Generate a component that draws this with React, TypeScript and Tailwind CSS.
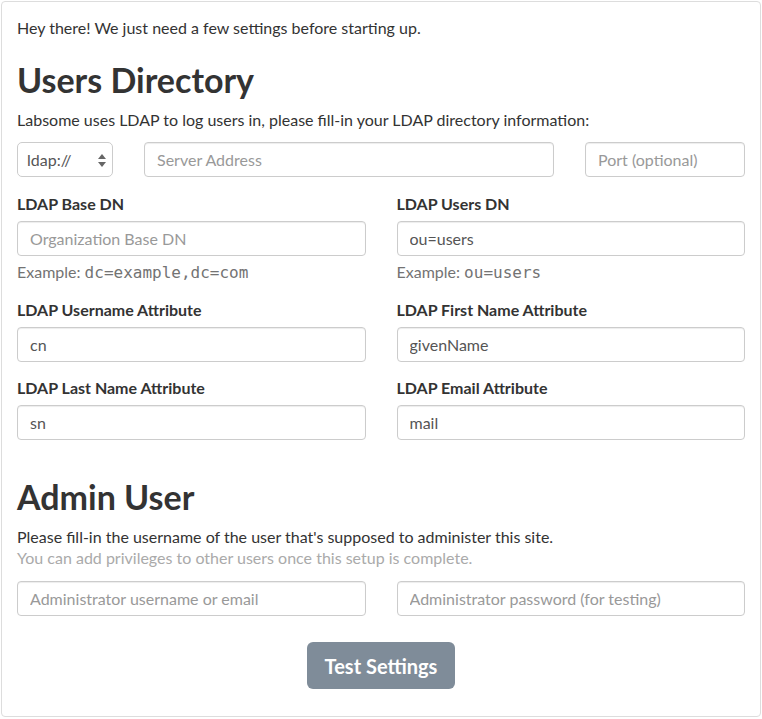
import React from "react";

const input =
  "h-[35px] w-full min-w-0 rounded-[4px] border border-[#cccccc] bg-white px-3 text-[16px] text-[#555555] placeholder:text-[#999999] shadow-[inset_0_1px_1px_rgba(0,0,0,0.075)] outline-none";
const label = "mb-[6px] block text-[16px] font-bold leading-[22px] text-[#333333]";
const mono = "font-['DejaVu_Sans_Mono',monospace] text-[16px]";

function Field({
  title,
  placeholder,
  value,
}: {
  title: string;
  placeholder?: string;
  value?: string;
}) {
  return (
    <div className="min-w-0 flex-1">
      <label className={label}>{title}</label>
      <input className={input} placeholder={placeholder} defaultValue={value} />
    </div>
  );
}

export default function App() {
  return (
    <div className="bg-white p-px font-['Lato',sans-serif] text-[16px] leading-[22px] text-[#333333]">
      <div className="h-[716px] rounded-[4px] border border-[#dddddd] px-[15px] pt-[15px]">
        <p>Hey there! We just need a few settings before starting up.</p>

        {/* Users directory */}
        <h1 className="mt-[21px] mb-[9px] text-[34px] font-bold leading-[40px]">Users Directory</h1>
        <p>Labsome uses LDAP to log users in, please fill-in your LDAP directory information:</p>

        <div className="mt-[11px] flex gap-[31px]">
          <div className="relative flex h-[35px] w-[96px] shrink-0 items-center rounded-[5px] border border-[#cccccc] bg-white pl-[9px] text-[16px] text-[#555555]">
            ldap://
            <svg className="absolute right-[6px] top-[11px]" width="8" height="13" viewBox="0 0 8 13">
              <path d="M4 0 L8 5 L0 5 Z" fill="#666" />
              <path d="M4 13 L8 8 L0 8 Z" fill="#666" />
            </svg>
          </div>
          <div className="w-[410px] shrink-0">
            <input className={input} placeholder="Server Address" />
          </div>
          <div className="min-w-0 flex-1">
            <input className={input} placeholder="Port (optional)" />
          </div>
        </div>

        <div className="mt-[16px] flex gap-[31px]">
          <div className="min-w-0 flex-1">
            <label className={label}>LDAP Base DN</label>
            <input className={input} placeholder="Organization Base DN" />
            <p className="mt-[5px] text-[#737373]">
              Example: <span className={mono}>dc=example,dc=com</span>
            </p>
          </div>
          <div className="min-w-0 flex-1">
            <label className={label}>LDAP Users DN</label>
            <input className={input} defaultValue="ou=users" />
            <p className="mt-[5px] text-[#737373]">
              Example: <span className={mono}>ou=users</span>
            </p>
          </div>
        </div>

        <div className="mt-[15px] flex gap-[31px]">
          <Field title="LDAP Username Attribute" value="cn" />
          <Field title="LDAP First Name Attribute" value="givenName" />
        </div>
        <div className="mt-[15px] flex gap-[31px]">
          <Field title="LDAP Last Name Attribute" value="sn" />
          <Field title="LDAP Email Attribute" value="mail" />
        </div>

        {/* Admin user */}
        <h1 className="mt-[37px] mb-[9px] text-[34px] font-bold leading-[40px]">Admin User</h1>
        <p className="leading-[21px]">Please fill-in the username of the user that's supposed to administer this site.</p>
        <p className="leading-[21px] text-[#aaaaaa]">You can add privileges to other users once this setup is complete.</p>

        <div className="mt-[13px] flex gap-[31px]">
          <input className={input} placeholder="Administrator username or email" />
          <input className={input} placeholder="Administrator password (for testing)" />
        </div>

        <div className="mt-[26px] flex justify-center">
          <button className="h-[47px] w-[148px] rounded-[6px] bg-[#7f8c99] text-[20px] font-bold text-white">
            Test Settings
          </button>
        </div>
      </div>
    </div>
  );
}
